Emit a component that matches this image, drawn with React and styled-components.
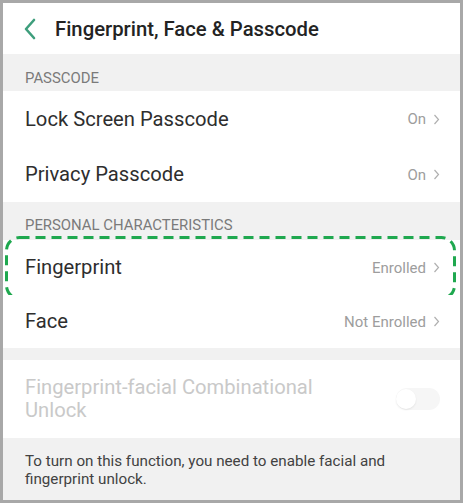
import React from "react";
import styled, { createGlobalStyle } from "styled-components";

const GlobalStyle = createGlobalStyle`
  html, body {
    margin: 0;
    padding: 0;
    background: #ffffff;
  }
  body {
    font-family: Roboto, "Noto Sans", Arial, sans-serif;
  }
`;

const Frame = styled.div`
  width: 463px;
  height: 503px;
  box-sizing: border-box;
  border: 3px solid #a8a8a8;
  background: #ffffff;
  display: flex;
  flex-direction: column;
  overflow: hidden;
`;

const Header = styled.div`
  height: 51px;
  display: flex;
  align-items: center;
  padding-left: 20px;
  gap: 18px;
`;

const Title = styled.div`
  font-size: 20.3px;
  font-weight: 500;
  color: #232323;
`;

const SectionHeader = styled.div`
  height: ${(p) => p.$h}px;
  box-sizing: border-box;
  background: #f1f1f1;
  display: flex;
  align-items: flex-end;
  padding: 0 0 ${(p) => p.$pb}px 22px;
  font-size: 14.9px;
  color: #7a7a7a;
`;

const Row = styled.div`
  position: relative;
  height: ${(p) => p.$h}px;
  display: flex;
  align-items: center;
  justify-content: space-between;
  padding: 0 20px 0 22px;
  background: #ffffff;
`;

const Label = styled.div`
  font-size: 20.2px;
  color: ${(p) => (p.$disabled ? "#c9c9c9" : "#2e2e2e")};
  line-height: 23px;
`;

const Value = styled.div`
  display: flex;
  align-items: center;
  gap: 7px;
  font-size: 15px;
  color: #9d9d9d;
`;

const Spacer = styled.div`
  height: 12px;
  background: #f1f1f1;
`;

const Footer = styled.div`
  flex: 1;
  background: #f1f1f1;
  padding: 14px 22px 0;
  font-size: 15.2px;
  line-height: 18px;
  color: #424242;
`;

const Highlight = styled.svg`
  position: absolute;
  left: 2px;
  top: -4px;
  pointer-events: none;
`;

const Toggle = styled.div`
  width: 44px;
  height: 22px;
  border-radius: 11px;
  background: #f6f6f6;
  position: relative;
  &::after {
    content: "";
    position: absolute;
    left: 0;
    top: 1px;
    width: 20px;
    height: 20px;
    border-radius: 50%;
    background: #ffffff;
    box-shadow: 0 1px 2px rgba(0, 0, 0, 0.08);
  }
`;

function Chevron() {
  return (
    <svg width="7" height="11" viewBox="0 0 7 11">
      <polyline points="1.5,1 5.5,5.5 1.5,10" fill="none" stroke="#b0b0b0" strokeWidth="1.2" />
    </svg>
  );
}

function BackIcon() {
  return (
    <svg width="14" height="22" viewBox="0 0 14 22">
      <polyline points="11,2 3,11 11,20" fill="none" stroke="#3e9e7c" strokeWidth="2.6" strokeLinecap="round" strokeLinejoin="round" />
    </svg>
  );
}

function Item({ label, value, h = 55, highlight }) {
  return (
    <Row $h={h}>
      <Label>{label}</Label>
      <Value>
        {value}
        <Chevron />
      </Value>
      {highlight && (
        <Highlight width="451" height="64" viewBox="0 0 451 64">
          <rect x="1.5" y="1.5" width="448" height="61" rx="13" fill="none" stroke="#1fa84f" strokeWidth="3" strokeDasharray="10 6" />
        </Highlight>
      )}
    </Row>
  );
}

export default function App() {
  return (
    <>
      <GlobalStyle />
      <Frame>
        <Header>
          <BackIcon />
          <Title>Fingerprint, Face &amp; Passcode</Title>
        </Header>
        <SectionHeader $h={37} $pb={4}>PASSCODE</SectionHeader>
        <Item label="Lock Screen Passcode" value="On" h={56} />
        <Item label="Privacy Passcode" value="On" h={55} />
        <SectionHeader $h={38} $pb={6}>PERSONAL CHARACTERISTICS</SectionHeader>
        <Item label="Fingerprint" value="Enrolled" h={55} highlight />
        <Item label="Face" value="Not Enrolled" h={53} />
        <Spacer />
        <Row $h={78}>
          <Label $disabled>
            Fingerprint-facial Combinational
            <br />
            Unlock
          </Label>
          <Toggle />
        </Row>
        <Footer>
          To turn on this function, you need to enable facial and fingerprint unlock.
        </Footer>
      </Frame>
    </>
  );
}
